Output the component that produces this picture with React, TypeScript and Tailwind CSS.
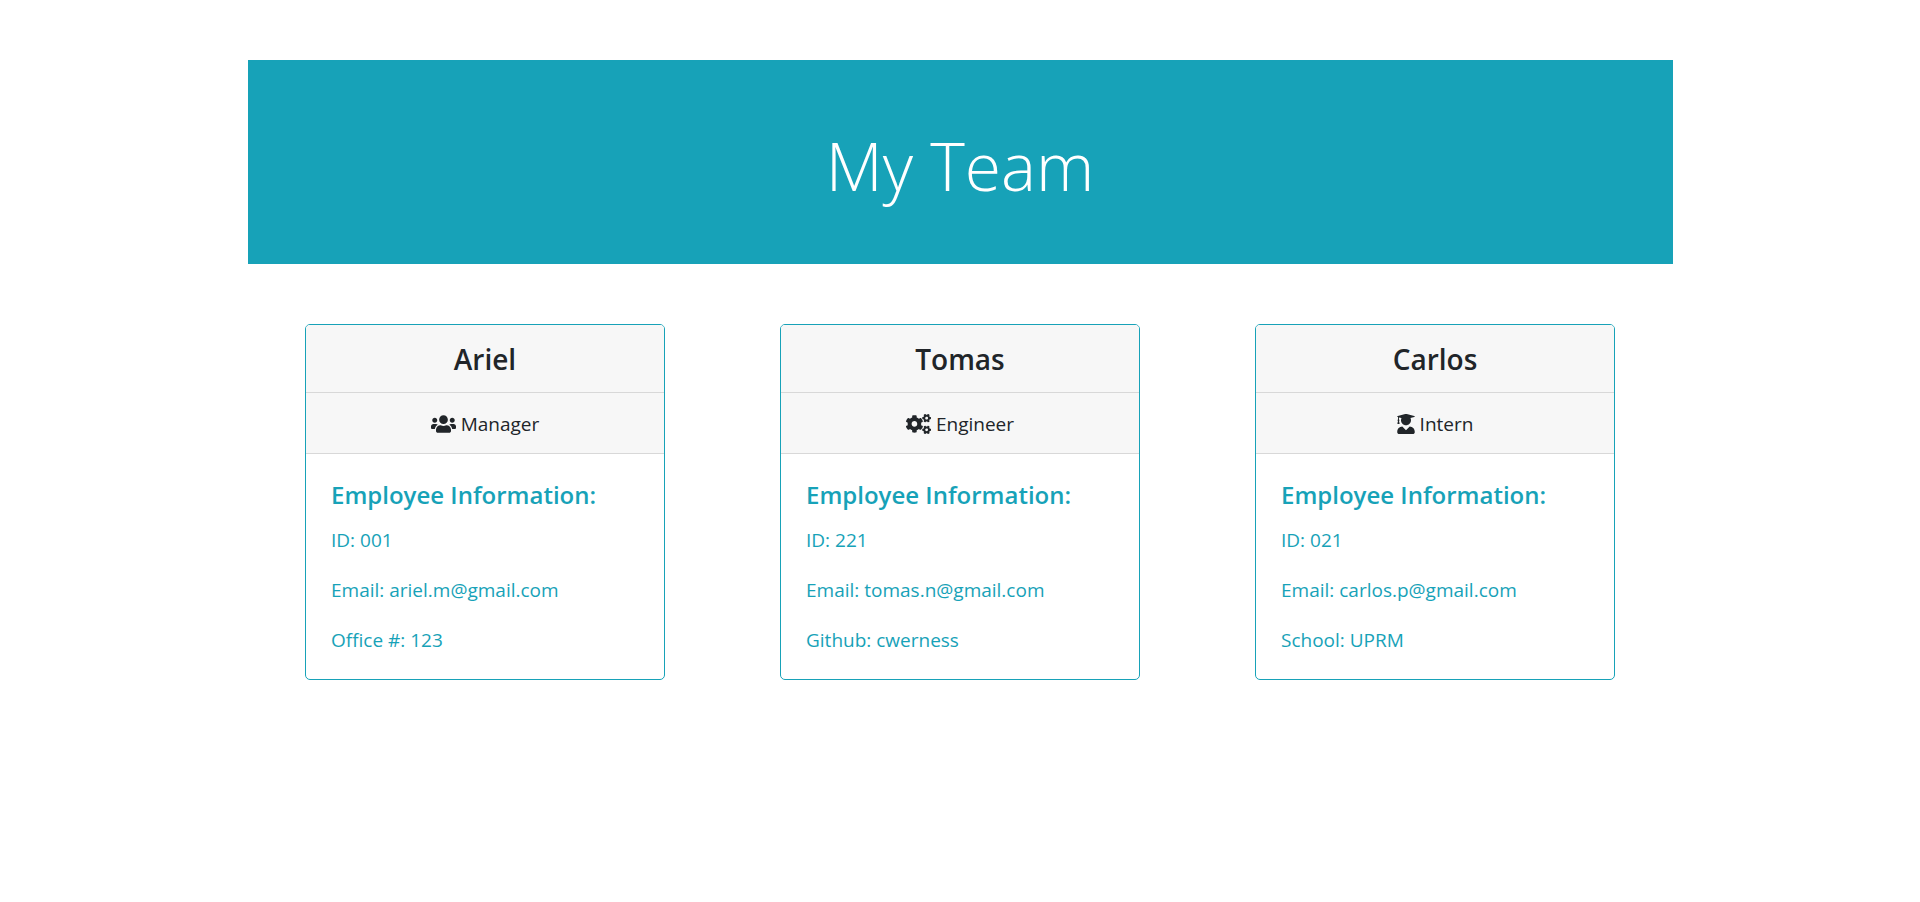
import { FaCogs, FaUserGraduate, FaUsers } from "react-icons/fa";
import type { IconType } from "react-icons";

type Member = {
  name: string;
  role: string;
  Icon: IconType;
  iconSize: string;
  id: string;
  email: string;
  extra: string;
};

const team: Member[] = [
  { name: "Ariel", role: "Manager", Icon: FaUsers, iconSize: "h-5 w-[25px]", id: "001", email: "ariel.m@gmail.com", extra: "Office #: 123" },
  { name: "Tomas", role: "Engineer", Icon: FaCogs, iconSize: "h-5 w-[25px]", id: "221", email: "tomas.n@gmail.com", extra: "Github: cwerness" },
  { name: "Carlos", role: "Intern", Icon: FaUserGraduate, iconSize: "h-5 w-[18px]", id: "021", email: "carlos.p@gmail.com", extra: "School: UPRM" },
];

function MemberCard({ name, role, Icon, iconSize, id, email, extra }: Member) {
  return (
    <article className="w-full max-w-[360px] overflow-hidden rounded-[5px] border border-[#17a2b8] bg-white">
      <h2 className="border-b border-[#d8d8d8] bg-[#f7f7f7] pt-4 pb-[15px] text-center text-[28px] leading-9 font-semibold">
        {name}
      </h2>
      <div className="flex items-center justify-center gap-[5px] border-b border-[#d8d8d8] bg-[#f7f7f7] pt-4 pb-[14px] leading-[30px]">
        <Icon className={iconSize} aria-hidden="true" />
        <span>{role}</span>
      </div>
      <div className="px-[25px] pt-[25px] pb-6 text-[#17a2b8]">
        <h3 className="mb-[15px] text-2xl leading-[31px] font-semibold">Employee Information:</h3>
        <div className="flex flex-col gap-5 leading-[30px]">
          <p>ID: {id}</p>
          <p>Email: {email}</p>
          <p>{extra}</p>
        </div>
      </div>
    </article>
  );
}

export default function App() {
  return (
    <main className="mx-auto w-full max-w-[1425px] py-[60px] font-['Open_Sans','Noto_Sans',sans-serif] text-[19px] text-[#212529]">
      <header className="bg-[#17a2b8] pt-[63px] pb-[57px] text-center text-white">
        <h1 className="text-[66px] leading-[84px] font-light">My Team</h1>
      </header>
      <section className="grid grid-cols-1 justify-items-center gap-y-8 pt-[60px] md:grid-cols-3">
        {team.map((member) => (
          <MemberCard key={member.id} {...member} />
        ))}
      </section>
    </main>
  );
}
